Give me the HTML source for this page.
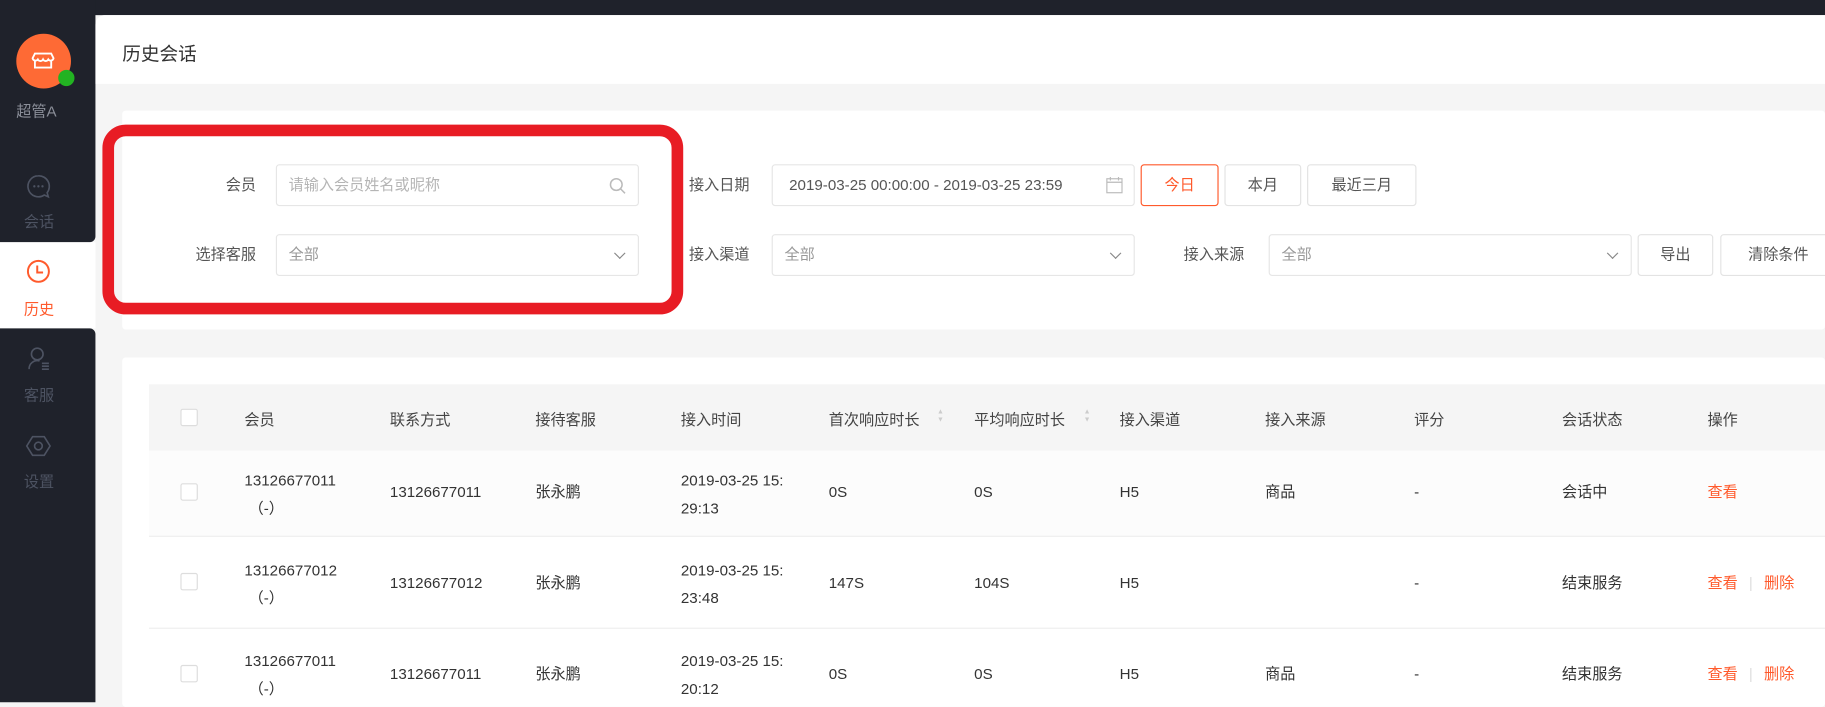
<!DOCTYPE html>
<html><head><meta charset="utf-8"><style>
*{margin:0;padding:0;box-sizing:border-box}
html,body{width:1825px;height:701px;overflow:hidden;background:#f5f5f5}
#w{position:absolute;left:0;top:0;width:1568px;height:603px;transform:scale(1.1639,1.1645);transform-origin:0 0;font-family:"Liberation Sans","Noto Sans CJK SC",sans-serif;font-size:13px;color:#333;background:#f5f5f5}
.a{position:absolute}
.dark{background:#1f222b}
.nav{position:absolute;left:0;width:67px;text-align:center;color:#4d5362;font-size:13px}
.inp{position:absolute;height:36px;border:1px solid #e6e6e6;border-radius:3px;background:#fff;color:#aaa;font-size:13px;line-height:34px;padding-left:10px}
.lab{position:absolute;font-size:13px;color:#555;line-height:36px}
.btn{position:absolute;height:36px;border:1px solid #e3e3e3;border-radius:3px;background:#fff;text-align:center;line-height:34px;color:#555}
.chev{position:absolute;right:12px;top:12px;width:7px;height:7px;border-right:1.3px solid #888;border-bottom:1.3px solid #888;transform:rotate(45deg)}
.th{position:absolute;top:350px;color:#444}
.cb{position:absolute;left:155px;width:15px;height:15px;border:1px solid #ddd;border-radius:2px;background:#fff}
.c{position:absolute;line-height:24px}
.or{color:#ff5a2c}
.sort{position:absolute;top:351px;width:6px;font-size:6px;line-height:7px;color:#ccc}
</style></head><body><div id="w">
<div class="a dark" style="left:0;top:0;width:1568px;height:13px"></div>
<div class="a dark" style="left:0;top:0;width:82px;height:208px;border-bottom-right-radius:5px"></div>
<div class="a" style="left:0;top:208px;width:82px;height:74px;background:#fff"></div>
<div class="a dark" style="left:0;top:282px;width:82px;height:321px;border-top-right-radius:5px"></div>
<div class="a" style="left:14px;top:29px;width:47px;height:47px;border-radius:50%;background:#fe6a35"></div>
<svg class="a" style="left:26px;top:41px" width="22" height="22" viewBox="0 0 22 22"><path d="M4 5h14l2 4a2.5 2.5 0 0 1-4.5 1 2.5 2.5 0 0 1-4.5 0 2.5 2.5 0 0 1-4.5 0A2.5 2.5 0 0 1 2 9z M4 11v6h14v-6" fill="none" stroke="#fff" stroke-width="1.6"/></svg>
<div class="a" style="left:50px;top:60px;width:14px;height:14px;border-radius:50%;background:#22b322"></div>
<div class="a" style="left:14px;top:85px;color:#8b8f99">超管A</div>
<svg class="a" style="left:22px;top:149px" width="22" height="22" viewBox="0 0 22 22"><path d="M11 2a9 9 0 1 0 5 16.5l3.5 1.5-1-3.5A9 9 0 0 0 11 2z" fill="none" stroke="#4d5362" stroke-width="1.4"/><circle cx="7.5" cy="11" r="1" fill="#4d5362"/><circle cx="11" cy="11" r="1" fill="#4d5362"/><circle cx="14.5" cy="11" r="1" fill="#4d5362"/></svg>
<div class="nav" style="top:180px">会话</div>
<svg class="a" style="left:22px;top:222px" width="22" height="22" viewBox="0 0 22 22"><circle cx="11" cy="11" r="9" fill="none" stroke="#ff5a2c" stroke-width="1.7"/><path d="M10 6v6h5" fill="none" stroke="#ff5a2c" stroke-width="1.7"/></svg>
<div class="nav" style="top:255px;color:#ff5a2c">历史</div>
<svg class="a" style="left:23px;top:297px" width="22" height="22" viewBox="0 0 22 22"><circle cx="9" cy="7" r="5" fill="none" stroke="#4d5362" stroke-width="1.4"/><path d="M2 20a7 7 0 0 1 9-7 M13 15h6M13 17.5h6M13 20h6" fill="none" stroke="#4d5362" stroke-width="1.4"/></svg>
<div class="nav" style="top:329px">客服</div>
<svg class="a" style="left:22px;top:372px" width="22" height="22" viewBox="0 0 22 22"><path d="M6 3h10l5 8-5 8H6l-5-8z" fill="none" stroke="#4d5362" stroke-width="1.4"/><circle cx="11" cy="11" r="3.3" fill="none" stroke="#4d5362" stroke-width="1.4"/></svg>
<div class="nav" style="top:403px">设置</div>

<div class="a" style="left:82px;top:13px;width:1486px;height:59px;background:#fff;border-top-left-radius:8px"></div>
<div class="a" style="left:105px;top:33px;font-size:16px;color:#333">历史会话</div>

<div class="a" style="left:105px;top:95px;width:1463px;height:188px;background:#fff;border-radius:3px"></div>
<div class="lab" style="left:150px;top:141px;width:70px;text-align:right">会员</div>
<div class="inp" style="left:237px;top:141px;width:312px;color:#b5b5b5">请输入会员姓名或昵称
<svg class="a" style="right:10px;top:10px" width="15" height="15" viewBox="0 0 15 15"><circle cx="6.5" cy="6.5" r="5" fill="none" stroke="#bbb" stroke-width="1.3"/><path d="M10 10l4 4" stroke="#bbb" stroke-width="1.3"/></svg></div>
<div class="lab" style="left:150px;top:201px;width:70px;text-align:right">选择客服</div>
<div class="inp" style="left:237px;top:201px;width:312px;color:#999">全部<div class="chev"></div></div>

<div class="lab" style="left:592px;top:141px">接入日期</div>
<div class="inp" style="left:663px;top:141px;width:312px;color:#555;padding-left:14px">2019-03-25 00:00:00 - 2019-03-25 23:59
<svg class="a" style="right:9px;top:9px" width="15" height="16" viewBox="0 0 15 16"><rect x="1" y="2.5" width="13" height="12" fill="none" stroke="#bbb"/><path d="M1 5.5h13M4 1v3M11 1v3" stroke="#bbb"/></svg></div>
<div class="btn" style="left:980px;top:141px;width:67px;border-color:#ff5a2c;color:#ff5a2c">今日</div>
<div class="btn" style="left:1052px;top:141px;width:66px">本月</div>
<div class="btn" style="left:1123px;top:141px;width:94px">最近三月</div>
<div class="lab" style="left:592px;top:201px">接入渠道</div>
<div class="inp" style="left:663px;top:201px;width:312px;color:#999">全部<div class="chev"></div></div>
<div class="lab" style="left:1017px;top:201px">接入来源</div>
<div class="inp" style="left:1090px;top:201px;width:312px;color:#999">全部<div class="chev"></div></div>
<div class="btn" style="left:1407px;top:201px;width:65px">导出</div>
<div class="btn" style="left:1478px;top:201px;width:100px">清除条件</div>

<div class="a" style="left:88px;top:107px;width:499px;height:163px;border:10px solid #e81c24;border-radius:20px"></div>

<div class="a" style="left:105px;top:307px;width:1463px;height:300px;background:#fff;border-radius:3px"></div>
<div class="a" style="left:128px;top:330px;width:1440px;height:57px;background:#f5f5f5"></div>
<div class="cb" style="top:351px"></div>
<div class="th" style="left:210px">会员</div>
<div class="th" style="left:335px">联系方式</div>
<div class="th" style="left:460px">接待客服</div>
<div class="th" style="left:585px">接入时间</div>
<div class="th" style="left:712px">首次响应时长</div><div class="sort" style="left:805px">▲<br>▼</div>
<div class="th" style="left:837px">平均响应时长</div><div class="sort" style="left:931px">▲<br>▼</div>
<div class="th" style="left:962px">接入渠道</div>
<div class="th" style="left:1087px">接入来源</div>
<div class="th" style="left:1215px">评分</div>
<div class="th" style="left:1342px">会话状态</div>
<div class="th" style="left:1467px">操作</div>

<div class="a" style="left:128px;top:387px;width:1440px;height:74px;background:#fcfcfc;border-bottom:1px solid #eee"></div>
<div class="a" style="left:128px;top:462px;width:1440px;height:78px;border-bottom:1px solid #eee"></div>

<div class="cb" style="top:415px"></div>
<div class="c" style="left:210px;top:401px">13126677011<br>&nbsp;（-）</div>
<div class="c" style="left:335px;top:411px">13126677011</div>
<div class="c" style="left:460px;top:411px">张永鹏</div>
<div class="c" style="left:585px;top:401px">2019-03-25 15:<br>29:13</div>
<div class="c" style="left:712px;top:411px">0S</div>
<div class="c" style="left:837px;top:411px">0S</div>
<div class="c" style="left:962px;top:411px">H5</div>
<div class="c" style="left:1087px;top:411px">商品</div>
<div class="c" style="left:1215px;top:411px">-</div>
<div class="c" style="left:1342px;top:411px">会话中</div>
<div class="c or" style="left:1467px;top:411px">查看</div>

<div class="cb" style="top:492px"></div>
<div class="c" style="left:210px;top:478px">13126677012<br>&nbsp;（-）</div>
<div class="c" style="left:335px;top:489px">13126677012</div>
<div class="c" style="left:460px;top:489px">张永鹏</div>
<div class="c" style="left:585px;top:478px">2019-03-25 15:<br>23:48</div>
<div class="c" style="left:712px;top:489px">147S</div>
<div class="c" style="left:837px;top:489px">104S</div>
<div class="c" style="left:962px;top:489px">H5</div>
<div class="c" style="left:1215px;top:489px">-</div>
<div class="c" style="left:1342px;top:489px">结束服务</div>
<div class="c or" style="left:1467px;top:489px">查看 <span style="color:#ddd;margin:0 6px">|</span> 删除</div>

<div class="cb" style="top:571px"></div>
<div class="c" style="left:210px;top:556px">13126677011<br>&nbsp;（-）</div>
<div class="c" style="left:335px;top:567px">13126677011</div>
<div class="c" style="left:460px;top:567px">张永鹏</div>
<div class="c" style="left:585px;top:556px">2019-03-25 15:<br>20:12</div>
<div class="c" style="left:712px;top:567px">0S</div>
<div class="c" style="left:837px;top:567px">0S</div>
<div class="c" style="left:962px;top:567px">H5</div>
<div class="c" style="left:1087px;top:567px">商品</div>
<div class="c" style="left:1215px;top:567px">-</div>
<div class="c" style="left:1342px;top:567px">结束服务</div>
<div class="c or" style="left:1467px;top:567px">查看 <span style="color:#ddd;margin:0 6px">|</span> 删除</div>
</div></body></html>
